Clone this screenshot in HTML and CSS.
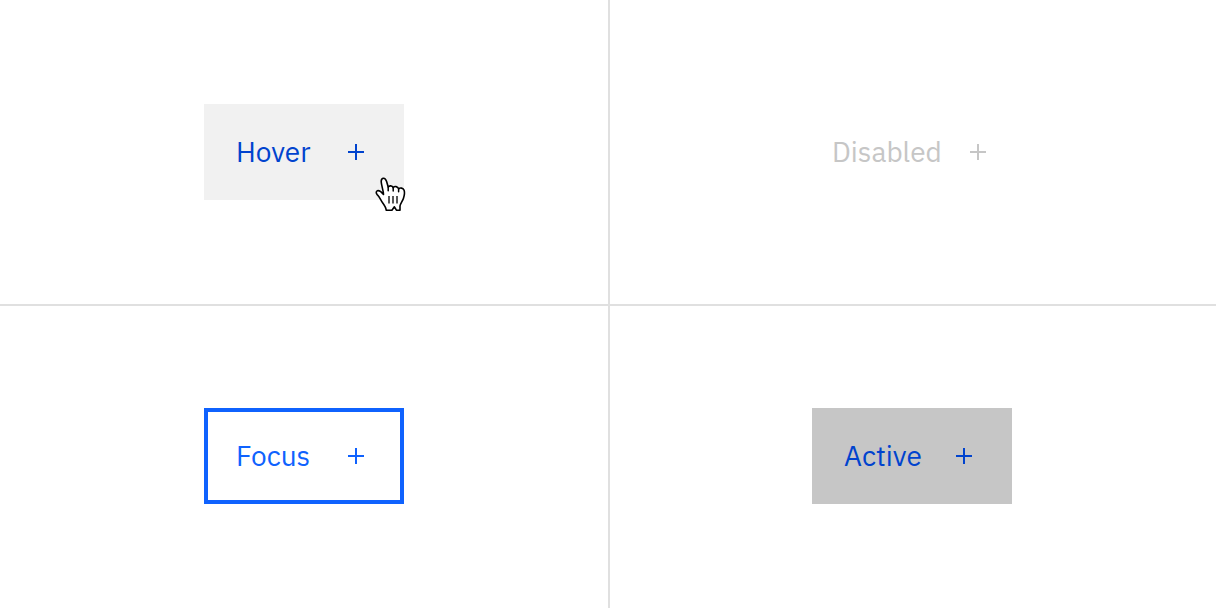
FILE: index.html
```
<!DOCTYPE html>
<html lang="en">
<head>
<meta charset="utf-8">
<meta name="viewport" content="width=device-width, initial-scale=1">
<title>Ghost button states</title>
<link rel="stylesheet" href="styles.css">
</head>
<body>
<main class="states">
  <section class="cell">
    <button type="button" class="btn btn-hover">
      <span>Hover</span>
      <svg class="icon" viewBox="0 0 32 32" aria-hidden="true"><path d="M17 15V8h-2v7H8v2h7v7h2v-7h7v-2z"/></svg>
      <svg class="pointer" viewBox="0 0 32 36" aria-hidden="true">
        <path class="hand" d="M12.2 33.2C12.2 30.5 10.2 27.8 8.4 25.4C6.8 23.2 5.5 19.8 3.2 17.6C1.8 16 2 14.4 3.4 13.8C5.3 13.1 7.4 15 9.5 17.4C9.5 14 7.4 8.5 7.2 4.8C7.1 2.6 8 1.3 9.5 1.2C11.2 1.1 12 2.6 12.6 4.5L14.2 10C15.2 8.4 18.2 8.4 19.2 10.6C20.6 8.9 23.6 9.2 24.6 11.8C26.2 10.4 29.2 11 30.1 13.2C30.8 15 30.3 18.6 29.4 21.5C28.6 24 26.3 26.8 26 29V33.2H22.4L20.4 29.8L17.9 33.2Z"/>
        <path class="crease" d="M14.2 10V13.8M19.2 10.6V14M24.6 11.8V14.8"/>
        <path class="palm" d="M15 19V26.6M19 19V26.6M23 19V26.6"/>
      </svg>
    </button>
  </section>
  <section class="cell">
    <button type="button" class="btn btn-disabled" disabled>
      <span>Disabled</span>
      <svg class="icon" viewBox="0 0 32 32" aria-hidden="true"><path d="M17 15V8h-2v7H8v2h7v7h2v-7h7v-2z"/></svg>
    </button>
  </section>
  <section class="cell">
    <button type="button" class="btn btn-focus">
      <span>Focus</span>
      <svg class="icon" viewBox="0 0 32 32" aria-hidden="true"><path d="M17 15V8h-2v7H8v2h7v7h2v-7h7v-2z"/></svg>
    </button>
  </section>
  <section class="cell">
    <button type="button" class="btn btn-active">
      <span>Active</span>
      <svg class="icon" viewBox="0 0 32 32" aria-hidden="true"><path d="M17 15V8h-2v7H8v2h7v7h2v-7h7v-2z"/></svg>
    </button>
  </section>
</main>
</body>
</html>
```
FILE: styles.css
```
* {
  box-sizing: border-box;
}

body {
  margin: 0;
  background: #fff;
  font-family: "IBM Plex Sans", Roboto, sans-serif;
}

.states {
  display: grid;
  grid-template-columns: 1fr 1fr;
  grid-template-rows: 1fr 1fr;
  min-height: 100vh;
}

.cell {
  display: flex;
  align-items: center;
  justify-content: center;
}

/* Dividers are shadows so the buttons stay centred in their cells. */
.cell:nth-child(even) {
  box-shadow: inset 2px 0 #e0e0e0;
}

.cell:nth-child(3) {
  box-shadow: inset 0 2px #e0e0e0;
}

.cell:nth-child(4) {
  box-shadow: inset 2px 2px #e0e0e0;
}

.btn {
  position: relative;
  display: flex;
  align-items: center;
  justify-content: space-between;
  min-width: 200px;
  min-height: 96px;
  padding: 0 32px;
  border: 0;
  border-radius: 0;
  background: transparent;
  color: #0f62fe;
  font: inherit;
  font-size: 28px;
  line-height: 36px;
}

.btn-hover {
  background: #f1f1f1;
  color: #0043ce;
}

.btn-disabled {
  min-width: 224px;
  padding-right: 30px;
  color: #c6c6c6;
}

.btn-focus {
  box-shadow: inset 0 0 0 4px #0f62fe;
}

.btn-active {
  background: #c6c6c6;
  color: #0043ce;
}

.icon {
  width: 32px;
  height: 32px;
  fill: currentColor;
}

.pointer {
  position: absolute;
  right: -2px;
  bottom: -13px;
  width: 32px;
  height: 36px;
}

.hand {
  fill: #fff;
  stroke: #000;
  stroke-width: 1.6;
  stroke-linejoin: round;
}

.crease,
.palm {
  fill: none;
  stroke: #000;
  stroke-width: 1.5;
  stroke-linecap: round;
}

.palm {
  stroke: #222;
  stroke-linecap: butt;
}
```
